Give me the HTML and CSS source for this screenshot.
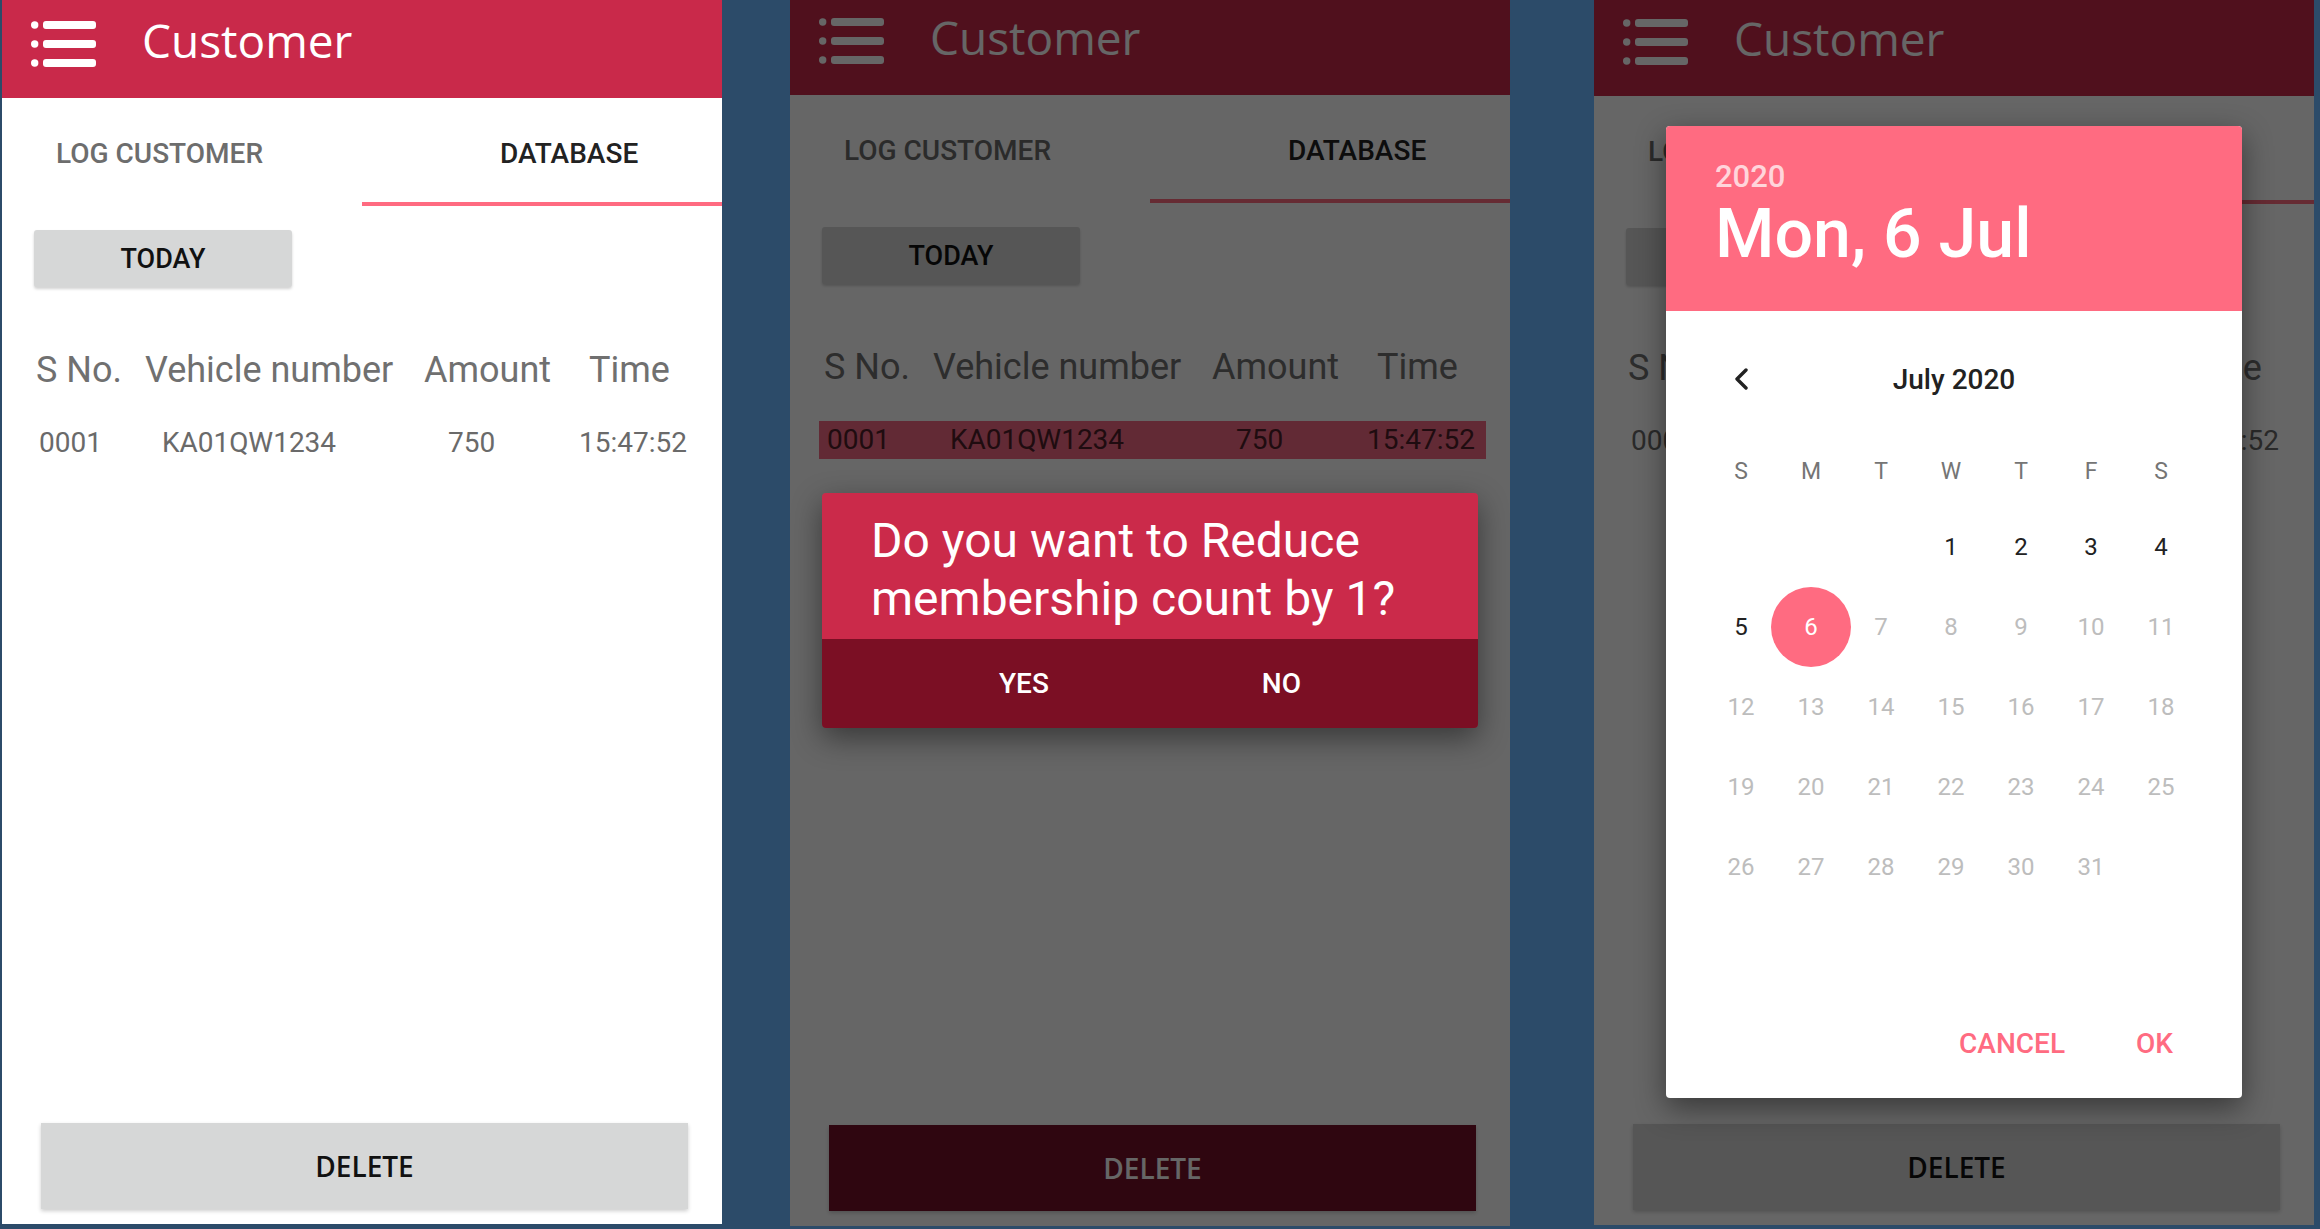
FILE: index.html
```html
<!DOCTYPE html>
<html lang="en">
<head>
<meta charset="utf-8">
<title>Customer</title>
<link rel="stylesheet" href="styles.css">
</head>
<body>

<!-- Screen 1 -->
<div class="screen screen--a">
  <header class="appbar">
    <svg class="menu-icon" viewBox="0 0 65 46" width="65" height="46"><g fill="#fff"><circle cx="3.7" cy="4" r="3.7"/><circle cx="3.7" cy="23" r="3.7"/><circle cx="3.7" cy="42" r="3.7"/><rect x="12" y="0" width="53" height="8" rx="3"/><rect x="12" y="19" width="53" height="8" rx="3"/><rect x="12" y="38" width="53" height="8" rx="3"/></g></svg>
    <h1 class="appbar-title">Customer</h1>
  </header>
  <nav class="tabs">
    <div class="tab tab--log">LOG CUSTOMER</div>
    <div class="tab tab--db">DATABASE</div>
  </nav>
  <div class="btn-today">TODAY</div>
  <div class="table-head"><span>S No.</span><span>Vehicle number</span><span>Amount</span><span>Time</span></div>
  <div class="table-row"><span>0001</span><span>KA01QW1234</span><span>750</span><span>15:47:52</span></div>
  <div class="btn-delete">DELETE</div>
</div>

<!-- Screen 2 -->
<div class="screen screen--b">
  <header class="appbar">
    <svg class="menu-icon" viewBox="0 0 65 46" width="65" height="46"><g fill="#fff"><circle cx="3.7" cy="4" r="3.7"/><circle cx="3.7" cy="23" r="3.7"/><circle cx="3.7" cy="42" r="3.7"/><rect x="12" y="0" width="53" height="8" rx="3"/><rect x="12" y="19" width="53" height="8" rx="3"/><rect x="12" y="38" width="53" height="8" rx="3"/></g></svg>
    <h1 class="appbar-title">Customer</h1>
  </header>
  <nav class="tabs">
    <div class="tab tab--log">LOG CUSTOMER</div>
    <div class="tab tab--db">DATABASE</div>
  </nav>
  <div class="btn-today">TODAY</div>
  <div class="table-head"><span>S No.</span><span>Vehicle number</span><span>Amount</span><span>Time</span></div>
  <div class="table-row table-row--selected"><span>0001</span><span>KA01QW1234</span><span>750</span><span>15:47:52</span></div>
  <div class="btn-delete btn-delete--dark">DELETE</div>
  <div class="scrim"></div>
  <div class="confirm">
    <div class="confirm-msg">Do you want to Reduce<br>membership count by 1?</div>
    <div class="confirm-actions"><span>YES</span><span>NO</span></div>
  </div>
</div>

<!-- Screen 3 -->
<div class="screen screen--c">
  <header class="appbar">
    <svg class="menu-icon" viewBox="0 0 65 46" width="65" height="46"><g fill="#fff"><circle cx="3.7" cy="4" r="3.7"/><circle cx="3.7" cy="23" r="3.7"/><circle cx="3.7" cy="42" r="3.7"/><rect x="12" y="0" width="53" height="8" rx="3"/><rect x="12" y="19" width="53" height="8" rx="3"/><rect x="12" y="38" width="53" height="8" rx="3"/></g></svg>
    <h1 class="appbar-title">Customer</h1>
  </header>
  <nav class="tabs">
    <div class="tab tab--log">LOG CUSTOMER</div>
    <div class="tab tab--db">DATABASE</div>
  </nav>
  <div class="btn-today">TODAY</div>
  <div class="table-head"><span>S No.</span><span>Vehicle number</span><span>Amount</span><span>Time</span></div>
  <div class="table-row"><span>0001</span><span>KA01QW1234</span><span>750</span><span>15:47:52</span></div>
  <div class="btn-delete">DELETE</div>
  <div class="scrim"></div>
  <div class="picker">
    <div class="picker-head">
      <div class="picker-year">2020</div>
      <div class="picker-date">Mon, 6 Jul</div>
    </div>
    <div class="picker-month">
      <svg class="picker-prev" viewBox="0 0 16 22" width="16" height="22"><path d="M13 2 L4 11 L13 20" fill="none" stroke="#222" stroke-width="3.4" stroke-linecap="round" stroke-linejoin="round"/></svg>
      <span class="picker-month-label">July 2020</span>
      <span></span>
    </div>
    <div class="picker-weekdays"><span>S</span><span>M</span><span>T</span><span>W</span><span>T</span><span>F</span><span>S</span></div>
    <div class="picker-days">
      <span></span><span></span><span></span>
      <span class="day">1</span><span class="day">2</span><span class="day">3</span><span class="day">4</span>
      <span class="day">5</span><span class="day day--selected"><i>6</i></span><span class="day day--off">7</span><span class="day day--off">8</span><span class="day day--off">9</span><span class="day day--off">10</span><span class="day day--off">11</span>
      <span class="day day--off">12</span><span class="day day--off">13</span><span class="day day--off">14</span><span class="day day--off">15</span><span class="day day--off">16</span><span class="day day--off">17</span><span class="day day--off">18</span>
      <span class="day day--off">19</span><span class="day day--off">20</span><span class="day day--off">21</span><span class="day day--off">22</span><span class="day day--off">23</span><span class="day day--off">24</span><span class="day day--off">25</span>
      <span class="day day--off">26</span><span class="day day--off">27</span><span class="day day--off">28</span><span class="day day--off">29</span><span class="day day--off">30</span><span class="day day--off">31</span>
    </div>
    <div class="picker-actions"><span>CANCEL</span><span>OK</span></div>
  </div>
</div>

</body>
</html>
```

FILE: styles.css
```css
* { box-sizing: border-box; margin: 0; padding: 0; }

html, body { width: 2320px; height: 1229px; overflow: hidden; }

body {
  background: #2c4b69;
  display: flex;
  align-items: flex-start;
  font-family: Roboto, "Noto Sans", sans-serif;
}

.screen {
  position: relative;
  flex-shrink: 0;
  width: 720px;
  height: 1224px;
  background: #fff;
  display: flex;
  flex-direction: column;
  overflow: hidden;
}
.screen--a { margin-left: 2px; }
.screen--b { margin-left: 68px; margin-top: -3px; height: 1229px; }
.screen--c { margin-left: 84px; margin-top: -2px; height: 1227px; }

/* App bar */
.appbar {
  flex-shrink: 0;
  height: 98px;
  background: #c9294a;
  display: flex;
  align-items: flex-start;
  padding: 17px 0 0 29px;
}
.menu-icon { display: block; margin-top: 4px; }
.appbar-title {
  margin-left: 46px;
  font-family: "Open Sans", "Noto Sans", sans-serif;
  font-weight: 400;
  font-size: 46px;
  line-height: 46px;
  color: #fff;
}

/* Tabs */
.tabs { flex-shrink: 0; display: flex; height: 108px; }
.tab {
  width: 360px;
  padding-top: 40px;
  font-size: 28px;
  line-height: 32px;
  font-weight: 500;
}
.tab--log { padding-left: 54px; color: #6d6d6d; }
.tab--db { padding-left: 138px; color: #222; border-bottom: 4px solid #ff6b81; }

/* TODAY */
.btn-today {
  flex-shrink: 0;
  margin: 24px 0 0 32px;
  width: 258px;
  height: 57px;
  background: #d6d7d7;
  border-radius: 3px;
  box-shadow: 0 2px 3px rgba(0, 0, 0, 0.18);
  display: flex;
  align-items: center;
  justify-content: center;
  font-size: 27px;
  font-weight: 500;
  color: #111;
}

/* Table */
.table-head {
  display: grid;
  grid-template-columns: 109px 279px 165px 1fr;
  margin: 63px 0 0 34px;
  font-size: 36px;
  line-height: 40px;
  color: #707070;
}
.table-row {
  display: grid;
  grid-template-columns: 123px 286px 131px 1fr;
  margin: 34px 24px 0 29px;
  padding: 3px 0 3px 8px;
  font-size: 28px;
  line-height: 32px;
  color: #6a6a6a;
}
.table-row--selected { background: rgb(245, 105, 132); color: #4e1f29; }

/* DELETE */
.btn-delete {
  flex-shrink: 0;
  margin: auto 0 15px 39px;
  width: 647px;
  height: 86px;
  background: #d6d7d7;
  box-shadow: 0 2px 4px rgba(0, 0, 0, 0.2);
  display: flex;
  align-items: center;
  justify-content: center;
  font-family: "Open Sans", "Noto Sans", sans-serif;
  font-weight: 600;
  font-size: 28px;
  color: #111;
}
.btn-delete--dark { background: #750f28; color: #fff; }

/* Scrim */
.scrim { position: absolute; inset: 0; background: rgba(0, 0, 0, 0.6); }

/* Confirm dialog */
.confirm {
  position: absolute;
  left: 32px;
  top: 496px;
  width: 656px;
  border-radius: 4px;
  overflow: hidden;
  box-shadow: 0 10px 30px rgba(0, 0, 0, 0.45);
}
.confirm-msg {
  height: 146px;
  background: #cb2a4a;
  color: #fff;
  font-size: 48px;
  line-height: 58px;
  padding: 19px 10px 0 49px;
  white-space: nowrap;
}
.confirm-actions {
  height: 89px;
  background: #7b0f24;
  display: flex;
  justify-content: center;
  align-items: center;
  gap: 213px;
  font-size: 28px;
  font-weight: 500;
  color: #fff;
}

/* Date picker */
.picker {
  position: absolute;
  left: 72px;
  top: 128px;
  width: 576px;
  height: 972px;
  background: #fff;
  border-radius: 4px;
  overflow: hidden;
  box-shadow: 0 10px 30px rgba(0, 0, 0, 0.45);
  display: flex;
  flex-direction: column;
}
.picker-head {
  flex-shrink: 0;
  height: 185px;
  background: #ff6b81;
  padding: 33px 49px 0;
  color: #fff;
}
.picker-year {
  font-size: 31px;
  line-height: 36px;
  font-weight: 500;
  color: rgba(255, 255, 255, 0.72);
}
.picker-date {
  margin-top: 3px;
  font-size: 68px;
  line-height: 72px;
  font-weight: 500;
}
.picker-month {
  display: grid;
  grid-template-columns: 1fr auto 1fr;
  align-items: center;
  height: 56px;
  margin-top: 40px;
}
.picker-prev { display: block; margin-left: 67px; }
.picker-month-label { font-size: 28px; font-weight: 500; color: #222; }

.picker-weekdays,
.picker-days {
  display: grid;
  grid-template-columns: repeat(7, 70px);
  margin-left: 40px;
}
.picker-weekdays {
  height: 56px;
  margin-top: 36px;
  align-items: center;
  justify-items: center;
  font-size: 23px;
  color: #757575;
}
.picker-days {
  margin-top: 8px;
  grid-auto-rows: 80px;
  font-size: 24px;
  color: #222;
}
.day { display: flex; align-items: center; justify-content: center; }
.day--off { color: #bdbdbd; }
.day--selected i {
  flex-shrink: 0;
  width: 80px;
  height: 80px;
  border-radius: 50%;
  background: #ff6b81;
  color: #fff;
  font-style: normal;
  display: flex;
  align-items: center;
  justify-content: center;
}
.picker-actions {
  margin-top: auto;
  height: 110px;
  display: flex;
  justify-content: flex-end;
  align-items: center;
  gap: 71px;
  padding-right: 69px;
  font-size: 28px;
  font-weight: 500;
  color: #ff6b81;
}
```
